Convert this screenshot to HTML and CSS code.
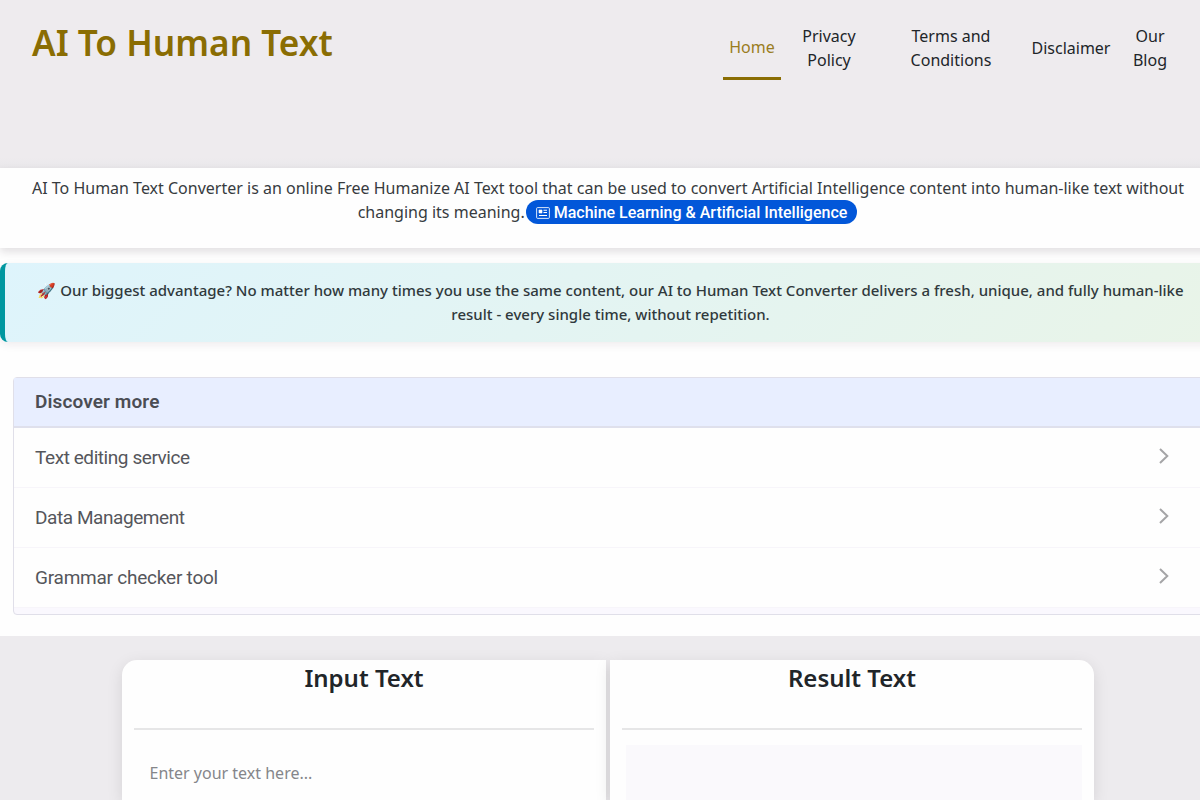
FILE: index.html
```html
<!DOCTYPE html>
<html lang="en">
<head>
    <meta charset="UTF-8">
    <meta name="viewport" content="width=device-width, initial-scale=1.0">
    <title>AI To Human Text</title>
    <link rel="stylesheet" href="styles.css">
</head>
<body>
    <div class="page">
        <header class="header">
            <h1 class="logo">AI To Human Text</h1>
            <nav class="nav">
                <a class="nav-link nav-home active" href="#">Home</a>
                <a class="nav-link nav-privacy" href="#">Privacy Policy</a>
                <a class="nav-link nav-terms" href="#">Terms and Conditions</a>
                <a class="nav-link nav-disclaimer" href="#">Disclaimer</a>
                <a class="nav-link nav-blog" href="#">Our Blog</a>
            </nav>
        </header>

        <section class="intro">
            <p>AI To Human Text Converter is an online Free Humanize AI Text tool that can be used to convert Artificial Intelligence content into human-like text without changing its meaning.<a class="chip" href="#"><svg class="chip-icon" viewBox="0 0 14 12"><rect x="0.6" y="0.6" width="12.8" height="10.8" rx="1" fill="none" stroke="#fff" stroke-opacity=".85"/><path d="M3 3h3v3H3z" fill="#fff" stroke="#fff" stroke-width=".6"/><path d="M7.5 3.2H11M7.5 5.5H11M3 8.5h8" fill="none" stroke="#fff" stroke-width="1.1"/></svg><span>Machine Learning &amp; Artificial Intelligence</span></a></p>
        </section>

        <section class="advantage">
            <p>🚀 Our biggest advantage? No matter how many times you use the same content, our AI to Human Text Converter delivers a fresh, unique, and fully human-like result - every single time, without repetition.</p>
        </section>

        <section class="discover">
            <h2 class="discover-title">Discover more</h2>
            <a class="discover-row" href="#"><span>Text editing service</span><svg class="chevron" viewBox="0 0 10 16"><path d="M1 1l7.3 7L1 15"/></svg></a>
            <a class="discover-row" href="#"><span>Data Management</span><svg class="chevron" viewBox="0 0 10 16"><path d="M1 1l7.3 7L1 15"/></svg></a>
            <a class="discover-row loose" href="#"><span>Grammar checker tool</span><svg class="chevron" viewBox="0 0 10 16"><path d="M1 1l7.3 7L1 15"/></svg></a>
        </section>

        <main class="converter">
            <div class="panel panel-input">
                <h2>Input Text</h2>
                <textarea class="box" placeholder="Enter your text here..."></textarea>
            </div>
            <div class="panel panel-result">
                <h2>Result Text</h2>
                <div class="box result-box"></div>
            </div>
        </main>
    </div>
</body>
</html>
```
FILE: styles.css
```css
* { box-sizing: border-box; }
html { overflow: hidden; }
body {
    margin: 0;
    height: 800px;
    overflow: hidden;
    font-family: "Noto Sans", sans-serif;
    font-size: 16px;
    line-height: 24px;
    color: #212529;
    background: #fefefe;
}
h1, h2, p { margin: 0; }
a { color: inherit; text-decoration: none; }
.page { width: 1216px; }

.header {
    display: flex;
    justify-content: space-between;
    align-items: flex-start;
    height: 168px;
    padding: 16px 32px 0;
    background: linear-gradient(#eeebee 158px, #e9e7ea);
}
.logo {
    padding-top: 2px;
    font-size: 35.2px;
    line-height: 48px;
    font-weight: 600;
    color: #8a6d03;
}
.nav {
    display: flex;
    align-items: center;
    height: 64px;
    text-align: center;
}
.nav-home { width: 58px; }
.nav-privacy { width: 70px; margin-left: 13px; }
.nav-terms { width: 110px; margin-left: 32px; }
.nav-disclaimer { width: 80px; margin-left: 25px; }
.nav-blog { width: 42px; margin: 0 13px 0 18px; }
.nav-link.active {
    height: 64px;
    padding-top: 19px;
    border-bottom: 3px solid #8a6d03;
    color: #9a7d1e;
}

.intro {
    height: 80px;
    padding: 8px 24px;
    text-align: center;
    color: #373b3f;
    background: #fefefe;
    box-shadow: 0 4px 8px rgba(40, 20, 40, .13);
}
.chip {
    display: inline-flex;
    align-items: center;
    gap: 4px;
    height: 24px;
    margin: 0 1px;
    padding: 1px 10px 0;
    border-radius: 12px;
    background: #0257d9;
    color: #fff;
    font-family: Roboto, sans-serif;
    font-weight: 500;
    vertical-align: top;
}
.chip-icon { width: 14px; height: 12px; }

.advantage {
    height: 79px;
    margin-top: 15px;
    padding: 15px 24px 16px;
    border-left: 5px solid #0097a0;
    border-radius: 8px;
    text-align: center;
    font-size: 15px;
    font-weight: 500;
    color: #30393c;
    background: linear-gradient(135deg, #def4fc, #e9f4e8);
    box-shadow: 0 3px 8px rgba(60, 20, 50, .08);
}

.discover {
    height: 238px;
    margin: 35px 0 0 13px;
    border: 1px solid #e0dfe9;
    border-radius: 4px;
    font-family: Roboto, sans-serif;
    font-size: 19px;
    color: #55565b;
    background: #faf8fe;
}
.discover-title {
    height: 50px;
    padding-left: 21px;
    border-bottom: 2px solid #dfe0ec;
    background: #e8eeff;
    font-size: 19px;
    line-height: 47px;
    font-weight: 600;
    letter-spacing: .12px;
    color: #4b4d54;
}
.discover-row {
    display: flex;
    align-items: center;
    justify-content: space-between;
    height: 60px;
    padding: 0 46px 0 21px;
    border-bottom: 1px solid #f7f5fa;
    background: #fefefe;
    letter-spacing: -.43px;
}
.discover-row.loose { letter-spacing: -.23px; }
.chevron {
    width: 10px;
    height: 16px;
    margin-bottom: 3px;
    fill: none;
    stroke: #a5a5a7;
    stroke-width: 2;
}

.converter {
    display: flex;
    gap: 4px;
    height: 164px;
    margin-top: 21px;
    padding: 24px 122px 0;
    background: #edebee;
}
.panel {
    flex: 1;
    height: 140px;
    padding: 0 12px;
    background: #fefefe;
    box-shadow: 0 4px 16px rgba(0, 0, 0, .1);
}
.panel-input { border-top-left-radius: 15px; }
.panel-result { border-top-right-radius: 15px; }
.panel h2 {
    height: 70px;
    padding-top: 4px;
    border-bottom: 2px solid #e6e6e7;
    font-size: 24px;
    line-height: 28px;
    font-weight: 600;
    text-align: center;
}
.box {
    display: block;
    width: 100%;
    height: 55px;
    margin-top: 15px;
    padding: 16px 16px 0 15.5px;
    border: 0;
    resize: none;
    overflow: hidden;
    background: transparent;
    font: inherit;
}
.box::placeholder { color: #85868a; }
.result-box {
    width: auto;
    margin-left: 4px;
    background: #faf9fc;
}
```
